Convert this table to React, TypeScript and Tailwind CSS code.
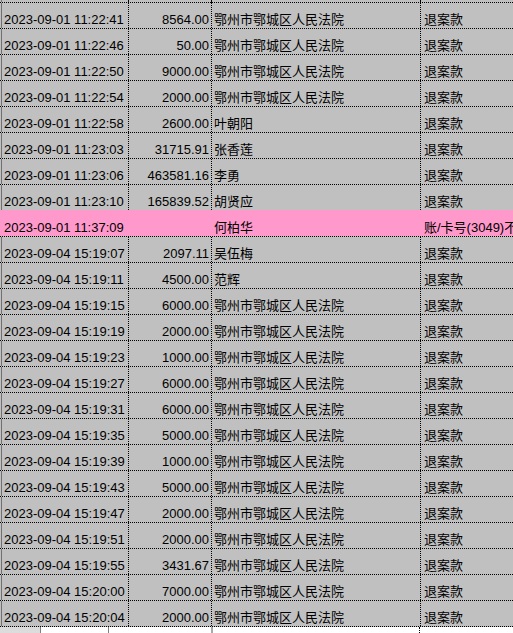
import React from "react"

type Row = { time: string; amount: string; name: string; note: string; pink?: boolean }

const COURT = "鄂州市鄂城区人民法院"
const REFUND = "退案款"

const rows: Row[] = [
  { time: "2023-09-01 11:22:41", amount: "8564.00", name: COURT, note: REFUND },
  { time: "2023-09-01 11:22:46", amount: "50.00", name: COURT, note: REFUND },
  { time: "2023-09-01 11:22:50", amount: "9000.00", name: COURT, note: REFUND },
  { time: "2023-09-01 11:22:54", amount: "2000.00", name: COURT, note: REFUND },
  { time: "2023-09-01 11:22:58", amount: "2600.00", name: "叶朝阳", note: REFUND },
  { time: "2023-09-01 11:23:03", amount: "31715.91", name: "张香莲", note: REFUND },
  { time: "2023-09-01 11:23:06", amount: "463581.16", name: "李勇", note: REFUND },
  { time: "2023-09-01 11:23:10", amount: "165839.52", name: "胡贤应", note: REFUND },
  { time: "2023-09-01 11:37:09", amount: "", name: "何柏华", note: "账/卡号(3049)不", pink: true },
  { time: "2023-09-04 15:19:07", amount: "2097.11", name: "吴伍梅", note: REFUND },
  { time: "2023-09-04 15:19:11", amount: "4500.00", name: "范辉", note: REFUND },
  { time: "2023-09-04 15:19:15", amount: "6000.00", name: COURT, note: REFUND },
  { time: "2023-09-04 15:19:19", amount: "2000.00", name: COURT, note: REFUND },
  { time: "2023-09-04 15:19:23", amount: "1000.00", name: COURT, note: REFUND },
  { time: "2023-09-04 15:19:27", amount: "6000.00", name: COURT, note: REFUND },
  { time: "2023-09-04 15:19:31", amount: "6000.00", name: COURT, note: REFUND },
  { time: "2023-09-04 15:19:35", amount: "5000.00", name: COURT, note: REFUND },
  { time: "2023-09-04 15:19:39", amount: "1000.00", name: COURT, note: REFUND },
  { time: "2023-09-04 15:19:43", amount: "5000.00", name: COURT, note: REFUND },
  { time: "2023-09-04 15:19:47", amount: "2000.00", name: COURT, note: REFUND },
  { time: "2023-09-04 15:19:51", amount: "2000.00", name: COURT, note: REFUND },
  { time: "2023-09-04 15:19:55", amount: "3431.67", name: COURT, note: REFUND },
  { time: "2023-09-04 15:20:00", amount: "7000.00", name: COURT, note: REFUND },
  { time: "2023-09-04 15:20:04", amount: "2000.00", name: COURT, note: REFUND },
]

function SheetRow({ row, last }: { row: Row; last: boolean }) {
  const line = row.pink ? "border-[#ff99cc]" : "border-black"
  return (
    <div
      className={`flex h-[26px] border-t border-dotted ${line} ${last ? "h-[27px] border-b" : ""} ${
        row.pink ? "bg-[#ff99cc]" : "bg-[#c0c0c0]"
      }`}
    >
      <div className="w-px" />
      <div className={`w-px ${row.pink ? "" : "bg-[#707070]"}`} />
      <div className={`w-[127px] shrink-0 flex items-end pl-[2px] pb-[1px] border-r border-dotted ${line}`}>
        <span className="whitespace-nowrap">{row.time}</span>
      </div>
      <div className={`w-[83px] shrink-0 flex items-end justify-end pr-[2px] pb-[1px] border-r border-dotted ${line}`}>
        <span className="whitespace-nowrap">{row.amount}</span>
      </div>
      <div className={`w-[209px] shrink-0 flex items-end pl-[2px] pb-[1px] border-r border-dotted ${line}`}>
        <span className="whitespace-nowrap">{row.name}</span>
      </div>
      <div className="flex-1 min-w-0 overflow-hidden flex items-end pl-[3px] pb-[1px]">
        <span className="whitespace-nowrap">{row.note}</span>
      </div>
    </div>
  )
}

export default function App() {
  return (
    <div
      className="w-[513px] h-[633px] overflow-hidden bg-[#c0c0c0] text-black text-[13px] leading-[15px]"
      style={{ fontFamily: '"Liberation Sans", "Noto Sans CJK SC", sans-serif' }}
    >
      {/* sliver of the row above */}
      <div className="flex h-[2px]">
        <div className="w-px" />
        <div className="w-px bg-[#707070]" />
        <div className="w-[127px] border-r border-dotted border-black" />
        <div className="w-[83px] border-r border-dotted border-black" />
        <div className="w-[209px] border-r border-dotted border-black" />
        <div className="flex-1" />
      </div>

      {rows.map((r, i) => (
        <SheetRow key={i} row={r} last={i === rows.length - 1} />
      ))}

      {/* bottom edge: sheet tabs area */}
      <div className="flex h-[8px] bg-white">
        <div className="w-[40px] bg-[#dcdcdc]" />
        <div className="w-px bg-[#808080]" />
        <div className="w-[67px]" />
        <div className="w-px bg-[#808080]" />
        <div className="w-[102px]" />
        <div className="w-[2px] bg-[#a8a8a8]" />
        <div className="w-[207px] border-r border-dotted border-black" />
        <div className="flex-1" />
      </div>
    </div>
  )
}
